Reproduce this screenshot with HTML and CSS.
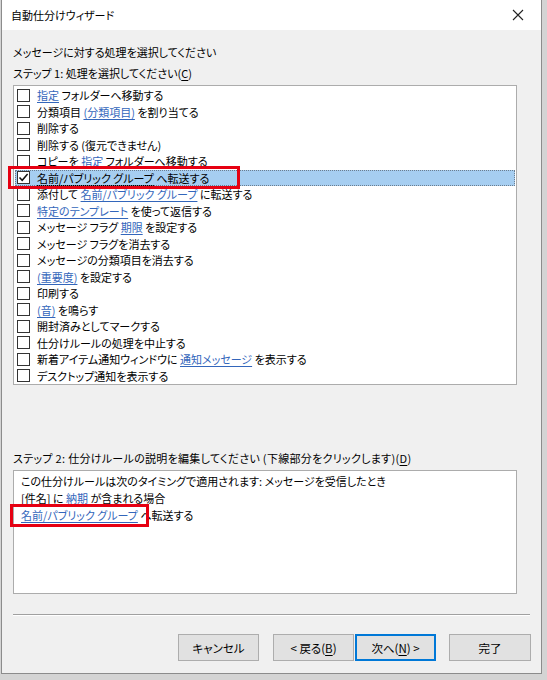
FILE: index.html
```html
<!DOCTYPE html>
<html lang="ja">
<head>
<meta charset="utf-8">
<link rel="stylesheet" href="styles.css">
</head>
<body>
<div class="window">
  <div class="titlebar">
    <span class="title">自動仕分けウィザード</span>
    <svg class="close" width="12" height="12" viewBox="0 0 12 12"><path d="M1 1L11 11M11 1L1 11" stroke="#222" stroke-width="1.1" fill="none"/></svg>
  </div>
  <div class="content">
    <div class="label first">メッセージに対する処理を選択してください</div>
    <div class="label step1">ステップ 1: 処理を選択してください(<u>C</u>)</div>
    <div class="listbox">
      <div class="row"><span class="cb"></span><span class="txt"><a>指定</a> フォルダーへ移動する</span></div>
      <div class="row"><span class="cb"></span><span class="txt">分類項目 <a>(分類項目)</a> を割り当てる</span></div>
      <div class="row"><span class="cb"></span><span class="txt">削除する</span></div>
      <div class="row"><span class="cb"></span><span class="txt">削除する (復元できません)</span></div>
      <div class="row"><span class="cb"></span><span class="txt">コピーを <a>指定</a> フォルダーへ移動する</span></div>
      <div class="row selected"><span class="cb checked"><svg width="11" height="11" viewBox="0 0 11 11"><path d="M1.5 5.5L4.2 8.3L9.6 2" stroke="#111" stroke-width="1.5" fill="none"/></svg></span><span class="txt"><u>名前/パブリック グループ</u> へ転送する</span></div>
      <div class="row"><span class="cb"></span><span class="txt">添付して <a>名前/パブリック グループ</a> に転送する</span></div>
      <div class="row"><span class="cb"></span><span class="txt"><a>特定のテンプレート</a> を使って返信する</span></div>
      <div class="row"><span class="cb"></span><span class="txt">メッセージ フラグ <a>期限</a> を設定する</span></div>
      <div class="row"><span class="cb"></span><span class="txt">メッセージ フラグを消去する</span></div>
      <div class="row"><span class="cb"></span><span class="txt">メッセージの分類項目を消去する</span></div>
      <div class="row"><span class="cb"></span><span class="txt"><a>(重要度)</a> を設定する</span></div>
      <div class="row"><span class="cb"></span><span class="txt">印刷する</span></div>
      <div class="row"><span class="cb"></span><span class="txt"><a>(音)</a> を鳴らす</span></div>
      <div class="row"><span class="cb"></span><span class="txt">開封済みとしてマークする</span></div>
      <div class="row"><span class="cb"></span><span class="txt">仕分けルールの処理を中止する</span></div>
      <div class="row"><span class="cb"></span><span class="txt">新着アイテム通知ウィンドウに <a>通知メッセージ</a> を表示する</span></div>
      <div class="row"><span class="cb"></span><span class="txt">デスクトップ通知を表示する</span></div>
    </div>
    <div class="label step2">ステップ 2: 仕分けルールの説明を編集してください (下線部分をクリックします)(<u>D</u>)</div>
    <div class="desc">
      <div class="line">この仕分けルールは次のタイミングで適用されます: メッセージを受信したとき</div>
      <div class="line">[件名] に <a>納期</a> が含まれる場合</div>
      <div class="line"><a>名前/パブリック グループ</a> へ転送する</div>
    </div>
    <div class="separator"></div>
    <div class="buttons">
      <button class="btn cancel">キャンセル</button>
      <button class="btn back">&lt; 戻る(<u>B</u>)</button>
      <button class="btn next">次へ(<u>N</u>) &gt;</button>
      <button class="btn finish">完了</button>
    </div>
  </div>
  <div class="redbox r1"></div>
  <div class="redbox r2"></div>
</div>
</body>
</html>
```
FILE: styles.css
```css
html, body {
  margin: 0;
  padding: 0;
}
body {
  background: #d4d4d4;
  width: 547px;
  height: 680px;
  overflow: hidden;
  font-family: "Noto Sans CJK JP", "Noto Sans", sans-serif;
  font-feature-settings: "palt";
  font-size: 11px;
  color: #000;
}
.window {
  position: relative;
  margin-left: 1px;
  width: 539px;
  height: 673px;
  background: #f0f0f0;
  border: 1px solid #8c8c8c;
  border-top: none;
}
.titlebar {
  height: 30px;
  background: #fff;
  display: flex;
  align-items: center;
  justify-content: space-between;
  padding: 0 17px 0 9px;
}
.title {
  font-size: 11px;
  line-height: 16px;
}
.content {
  padding-left: 11px;
  width: 518px;
}
.label {
  line-height: 16px;
  white-space: nowrap;
}
.first { margin-top: 14px; }
.step1 { margin-top: 5px; }
.step2 { margin-top: 65px; letter-spacing: 0.3px; }
.listbox {
  margin-top: 4px;
  width: 502px;
  height: 297px;
  background: #fff;
  border: 1px solid #acacac;
  padding-top: 1px;
  box-sizing: content-box;
}
.row {
  height: 16.5px;
  display: flex;
  align-items: center;
  margin: 0 1px;
  box-sizing: border-box;
  white-space: nowrap;
}
.row.selected {
  background: #a6cef1;
  outline: 1px dotted #6b7d8f;
  outline-offset: -1px;
}
.cb {
  width: 11px;
  height: 11px;
  border: 1px solid #333;
  background: #fff;
  margin-left: 2px;
  margin-right: 7px;
  flex: none;
  display: flex;
  align-items: center;
  justify-content: center;
}
.cb.checked svg { display: block; }
.txt { line-height: 16px; }
a {
  color: #3366bb;
  text-decoration: underline;
  text-underline-offset: 2px;
}
u { text-underline-offset: 2px; }
.desc {
  margin-top: 4px;
  background: #fff;
  border: 1px solid #acacac;
  padding: 2px 0 0 7px;
  box-sizing: content-box;
  width: 495px;
  height: 120px;
}
.line {
  line-height: 17px;
  white-space: nowrap;
}
.separator {
  margin-top: 20px;
  width: 517px;
  border-top: 1px solid #a0a0a0;
  border-bottom: 1px solid #ffffff;
}
.buttons {
  margin-top: 18px;
  display: flex;
  justify-content: flex-end;
  width: 518px;
}
.btn {
  font-family: inherit;
  font-feature-settings: "palt";
  font-size: 11.5px;
  height: 27px;
  width: 81px;
  background: #e1e1e1;
  border: 1px solid #adadad;
  color: #000;
  padding: 0;
  margin: 0;
}
.back { margin-left: 14px; }
.next {
  margin-left: 1px;
  border: 1px solid #0078d7;
  box-shadow: inset 0 0 0 1px #0078d7;
}
.finish { margin-left: 13px; width: 82px; }
.redbox {
  position: absolute;
  border: 3px solid #e60012;
  box-sizing: border-box;
}
.r1 { left: 6px; top: 166px; width: 232px; height: 23px; }
.r2 { left: 8px; top: 504px; width: 139px; height: 23px; }
```
